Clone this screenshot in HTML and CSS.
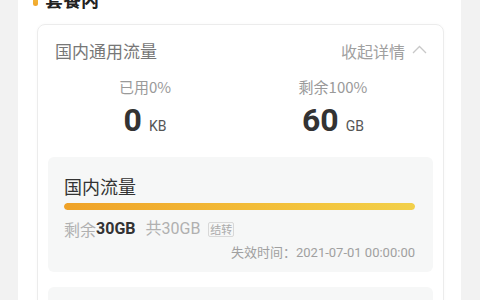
FILE: index.html
```html
<!DOCTYPE html>
<html lang="zh-CN">
<head>
<meta charset="utf-8">
<link rel="stylesheet" href="styles.css">
</head>
<body>
<div class="page">
  <div class="section-title"><span class="mark"></span><span class="title-text">套餐内</span></div>
  <div class="card">
    <div class="card-head">
      <span class="card-name">国内通用流量</span>
      <span class="toggle">收起详情<svg class="chev" width="15" height="9" viewBox="0 0 15 9"><path d="M1 8 L7.5 1.5 L14 8" fill="none" stroke="#c8c8c8" stroke-width="1.3"/></svg></span>
    </div>
    <div class="stats">
      <div class="stat">
        <div class="stat-label">已用0%</div>
        <div class="stat-value"><span class="num">0</span><span class="unit">KB</span></div>
      </div>
      <div class="stat">
        <div class="stat-label">剩余100%</div>
        <div class="stat-value"><span class="num">60</span><span class="unit">GB</span></div>
      </div>
    </div>
    <div class="pkg">
      <div class="pkg-name">国内流量</div>
      <div class="bar"><div class="bar-fill" style="width:100%"></div></div>
      <div class="pkg-info"><span class="muted">剩余</span><b class="strong">30GB</b><span class="muted total">共30GB</span><span class="tag">结转</span></div>
      <div class="expire">失效时间：2021-07-01 00:00:00</div>
    </div>
    <div class="pkg pkg-next"></div>
  </div>
</div>
</body>
</html>
```
FILE: styles.css
```css
* { box-sizing: border-box; }
html, body { margin: 0; padding: 0; }
body {
  background: #f2f2f2;
  font-family: Roboto, "Noto Sans CJK SC", sans-serif;
  width: 480px;
  height: 300px;
  overflow: hidden;
}
.page {
  margin: 0 19px 0 18px;
  background: #fff;
  height: 300px;
  padding: 0 17px 0 19px;
  overflow: hidden;
}
.section-title {
  display: flex;
  align-items: flex-start;
  margin: -10px 0 0 -4px;
  height: 18px;
}
.mark {
  width: 5px;
  height: 16px;
  border-radius: 3px;
  background: linear-gradient(#f7c948, #f0a52a);
  margin-top: 0;
}
.title-text {
  margin-left: 7px;
  font-size: 18px;
  line-height: 18px;
  font-weight: 700;
  color: #222;
  font-family: "Noto Sans CJK SC", sans-serif;
}
.card {
  margin-top: 16px;
  border: 1px solid #ececec;
  border-radius: 8px;
  padding: 15px 10px 0 10px;
  height: 290px;
  box-shadow: 0 0 3px rgba(0,0,0,0.03);
}
.card-head {
  display: flex;
  justify-content: space-between;
  align-items: center;
  padding: 0 6px 0 7px;
  height: 22px;
}
.card-name {
  font-family: "Noto Sans CJK SC", sans-serif;
  font-size: 17px;
  line-height: 22px;
  color: #777;
}
.toggle {
  font-family: "Noto Sans CJK SC", sans-serif;
  font-size: 16px;
  line-height: 22px;
  color: #a0a0a0;
  display: flex;
  align-items: center;
}
.chev { margin-left: 7px; margin-top: -3px; }
.stats {
  display: grid;
  grid-template-columns: 1fr 1fr;
  padding: 0 6px 0 3px;
  margin-top: 15px;
}
.stat { text-align: center; }
.stat-label {
  font-family: "Noto Sans CJK SC", sans-serif;
  font-size: 15px;
  line-height: 20px;
  color: #9a9a9a;
}
.stat-value {
  margin-top: 5px;
  line-height: 36px;
  height: 36px;
  color: #333;
}
.num {
  font-size: 32px;
  font-weight: 700;
  color: #333;
}
.unit {
  font-size: 14px;
  color: #555;
  margin-left: 7px;
}
.pkg {
  margin-top: 19px;
  background: #f6f7f7;
  border-radius: 6px;
  padding: 17px 18px 0 16px;
  height: 115px;
}
.pkg-name {
  font-family: "Noto Sans CJK SC", sans-serif;
  font-size: 18px;
  line-height: 24px;
  color: #333;
}
.bar {
  margin-top: 5px;
  height: 7px;
  border-radius: 4px;
  background: #eee;
  overflow: hidden;
}
.bar-fill {
  height: 100%;
  border-radius: 4px;
  background: linear-gradient(90deg, #efa228, #f3c43c 70%, #f2d04a);
}
.pkg-info {
  margin-top: 8px;
  display: flex;
  align-items: center;
  font-size: 16px;
  line-height: 22px;
  height: 22px;
}
.muted {
  color: #b0b0b0;
  font-family: "Noto Sans CJK SC", sans-serif;
}
.strong { color: #333; font-weight: 700; }
.total { margin-left: 10px; font-family: Roboto, "Noto Sans CJK SC", sans-serif; }
.tag {
  margin-left: 8px;
  font-family: "Noto Sans CJK SC", sans-serif;
  font-size: 11px;
  line-height: 13px;
  color: #aaa;
  border: 1px solid #d8d8d8;
  border-radius: 2px;
  padding: 0 1px;
}
.expire {
  margin-top: 4px;
  text-align: right;
  font-size: 13px;
  line-height: 18px;
  color: #a0a0a0;
  font-family: Roboto, "Noto Sans CJK SC", sans-serif;
}
.pkg-next {
  margin-top: 15px;
  height: 40px;
}
```
